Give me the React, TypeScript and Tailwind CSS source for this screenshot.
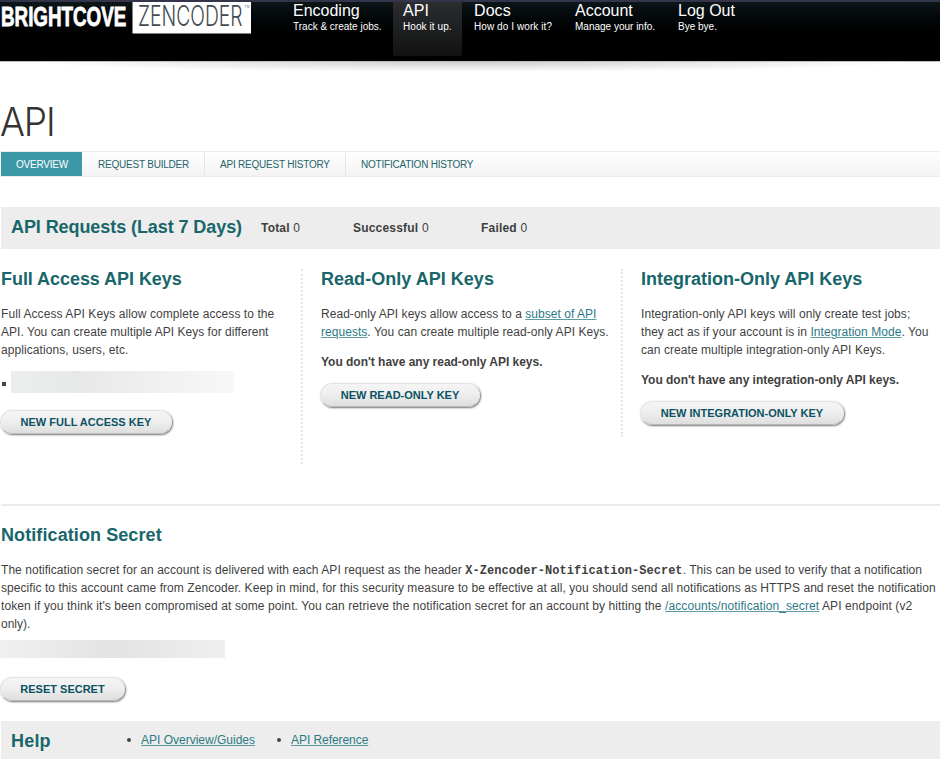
import type { ReactNode } from "react";

const navItems = [
  { title: "Encoding", note: "Track & create jobs.", box: "w-[108px]" },
  { title: "API", note: "Hook it up.", box: "w-[69px] bg-linear-to-b from-[#2b2d2f] to-[#121212] tracking-[0.08px]" },
  { title: "Docs", note: "How do I work it?", box: "w-[99px] tracking-[0.08px]" },
  { title: "Account", note: "Manage your info.", box: "w-[101px]" },
  { title: "Log Out", note: "Bye bye.", box: "w-[90px]" },
];

function Logo() {
  return (
    <svg width="252" height="36" viewBox="0 0 252 36" className="block shrink-0">
      <text transform="translate(1 26.200) scale(0.66 1)" fontSize="28.500" fontWeight="700" fill="#fff" stroke="#fff" strokeWidth="0.900" fontFamily="Liberation Sans, sans-serif">BRIGHTCOVE</text>
      <rect x="132.500" y="2" width="118.500" height="31.500" fill="#fff" />
      <text transform="translate(138 26.200) scale(0.69 1)" fontSize="28" fontWeight="300" fill="#444b4f" fontFamily="Inter, sans-serif">ZENCODER</text>
      <text x="244.500" y="7.500" fontSize="3.500" fill="#777" fontFamily="Liberation Sans, sans-serif">TM</text>
    </svg>
  );
}

function Heading({ children, className = "tracking-[-0.05px]" }: { children: ReactNode; className?: string }) {
  return <h2 className={`h-[22px] whitespace-nowrap text-[18px] leading-[20px] font-bold text-[#18666a] ${className}`}>{children}</h2>;
}

function Link({ children }: { children: ReactNode }) {
  return <a className="text-[#2c7a85] underline decoration-[#5c9ba3] decoration-1 underline-offset-1">{children}</a>;
}

function PillButton({ children, className }: { children: ReactNode; className: string }) {
  return (
    <button className={`-ml-px block h-[24px] rounded-full border border-[#e2e2e2] border-b-[#bbb] bg-linear-to-b from-[#f5f5f5] from-0% via-[#eeeeee] via-50% to-[#dedede] to-100% text-center text-[11px] leading-[22px] font-bold whitespace-nowrap text-[#0b5264] shadow-[1px_1px_2px_rgba(0,0,0,0.55)] ${className}`}>
      {children}
    </button>
  );
}

export default function App() {
  return (
    <div className="h-[760px] w-[940px] overflow-hidden bg-white font-['Liberation_Sans',Arial,sans-serif] text-[12px] leading-[18px] text-[#3f3f3f]">
      <header className="flex h-[61px] border-t-2 border-[#34354a] bg-linear-to-b from-[#0c1518] to-black to-80% text-white">
        <div className="-mt-[2px] w-[283px]"><Logo /></div>
        <nav className="flex gap-[2px]">
          {navItems.map((item) => (
            <a key={item.title} className={`block h-[54px] pl-[10px] whitespace-nowrap ${item.box}`}>
              <span className="block text-[16px] leading-[18px]">{item.title}</span>
              <span className="block text-[10px] leading-[14px]">{item.note}</span>
            </a>
          ))}
        </nav>
      </header>
      <div className="h-[10px] border-t border-[#bdbdbd] bg-[radial-gradient(ellipse_440px_10px_at_470px_0px,#cfcfcf,#ffffff)]" />

      <main className="pl-px">
        <h1 className="-ml-px mt-[28px] h-[52px] w-[80px] origin-left scale-x-[0.95] pt-[3px] font-['Inter',sans-serif] text-[39px] leading-[40px] font-light tracking-[-1.2px] text-[#333]">API</h1>
        <nav className="flex h-[26px] border-y border-[#ececec] bg-linear-to-b from-white to-[#f3f3f3] text-[10px] leading-[25px] tracking-[-0.22px] whitespace-nowrap text-[#23656a]">
          <a className="w-[81px] bg-[#3c98a6] pl-[15px] text-white">OVERVIEW</a>
          <a className="w-[123px] border-r border-[#e6e6e6] pl-[16px]">REQUEST BUILDER</a>
          <a className="w-[141px] border-r border-[#e6e6e6] pl-[15px]">API REQUEST HISTORY</a>
          <a className="pl-[15px]">NOTIFICATION HISTORY</a>
        </nav>

        <section className="mt-[30px] flex h-[42px] items-center bg-[#ededed] pl-[10px] tracking-[0.2px] whitespace-nowrap">
          <div className="w-[250px]"><Heading className="tracking-[-0.08px]">API Requests (Last 7 Days)</Heading></div>
          <div className="w-[92px]"><b>Total</b> 0</div>
          <div className="w-[128px]"><b>Successful</b> 0</div>
          <div><b>Failed</b> 0</div>
        </section>

        <section className="mt-[20px] flex h-[235px] items-start">
          <div className="h-[195px] w-[302px] border-r-2 border-dotted border-[#e4e4e4]">
            <Heading>Full Access API Keys</Heading>
            <p className="mt-[14px] whitespace-nowrap">
              <span className="tracking-[0.08px]">Full Access API Keys allow complete access to the</span><br />
              <span className="tracking-[0.03px]">API. You can create multiple API Keys for different</span><br />
              <span className="tracking-[0.08px]">applications, users, etc.</span>
            </p>
            <div className="mt-[12px] flex h-[22px] items-center gap-[5px] pl-px">
              <span className="mt-[4px] size-[4px] bg-[#444]" />
              <span className="h-[22px] w-[223px] bg-linear-to-r from-[#eceeee] via-[#e7e8e8] via-30% to-[#f8f8f8]" />
            </div>
            <PillButton className="mt-[17px] w-[172px]">NEW FULL ACCESS KEY</PillButton>
          </div>
          <div className="h-[168px] w-[320px] border-r-2 border-dotted border-[#e4e4e4] pl-[18px]">
            <Heading className="tracking-[0.03px]">Read-Only API Keys</Heading>
            <p className="mt-[14px] tracking-[0.04px] whitespace-nowrap">Read-only API keys allow access to a <Link>subset of API</Link><br /><Link>requests</Link>. You can create multiple read-only API Keys.</p>
            <p className="mt-[12px] font-bold tracking-[-0.02px]">You don't have any read-only API keys.</p>
            <PillButton className="mt-[12px] w-[160px]">NEW READ-ONLY KEY</PillButton>
          </div>
          <div className="pl-[18px]">
            <Heading className="tracking-[0px]">Integration-Only API Keys</Heading>
            <p className="mt-[14px] tracking-[0.06px] whitespace-nowrap">Integration-only API keys will only create test jobs;<br />they act as if your account is in <Link>Integration Mode</Link>. You<br />can create multiple integration-only API Keys.</p>
            <p className="mt-[12px] font-bold tracking-[-0.02px]">You don't have any integration-only API keys.</p>
            <PillButton className="mt-[12px] w-[204px]">NEW INTEGRATION-ONLY KEY</PillButton>
          </div>
        </section>

        <section className="border-t-2 border-[#ebebeb] pt-[19px]">
          <Heading className="tracking-[0.09px]">Notification Secret</Heading>
          <p className="mt-[14px] whitespace-nowrap">
            <span className="block h-[18px] tracking-[0.045px]">The notification secret for an account is delivered with each API request as the header <b className="font-['Liberation_Mono',monospace]">X-Zencoder-Notification-Secret</b>. This can be used to verify that a notification</span>
            <span className="block tracking-[0.063px]">specific to this account came from Zencoder. Keep in mind, for this security measure to be effective at all, you should send all notifications as HTTPS and reset the notification</span>
            <span className="block tracking-[0.095px]">token if you think it's been compromised at some point. You can retrieve the notification secret for an account by hitting the <Link>/accounts/notification_secret</Link> API endpoint (v2</span>
            <span className="block">only).</span>
          </p>
          <div className="mt-[7px] -ml-px h-[18px] w-[225px] bg-linear-to-r from-[#f0f0f0] via-[#e3e3e3] via-50% to-[#efefef]" />
          <PillButton className="mt-[19px] w-[125px]">RESET SECRET</PillButton>
        </section>

        <footer className="mt-[20px] flex h-[38px] items-center bg-[#ededed] pl-[10px]">
          <div className="w-[116px] pt-[3px]"><Heading className="tracking-[0.2px]">Help</Heading></div>
          <ul className="flex">
            <li className="flex w-[150px] items-center gap-[10px]"><span className="size-[4px] rounded-full bg-[#444]" /><Link>API Overview/Guides</Link></li>
            <li className="flex items-center gap-[10px] tracking-[-0.06px]"><span className="size-[4px] rounded-full bg-[#444]" /><Link>API Reference</Link></li>
          </ul>
        </footer>
      </main>
    </div>
  );
}
